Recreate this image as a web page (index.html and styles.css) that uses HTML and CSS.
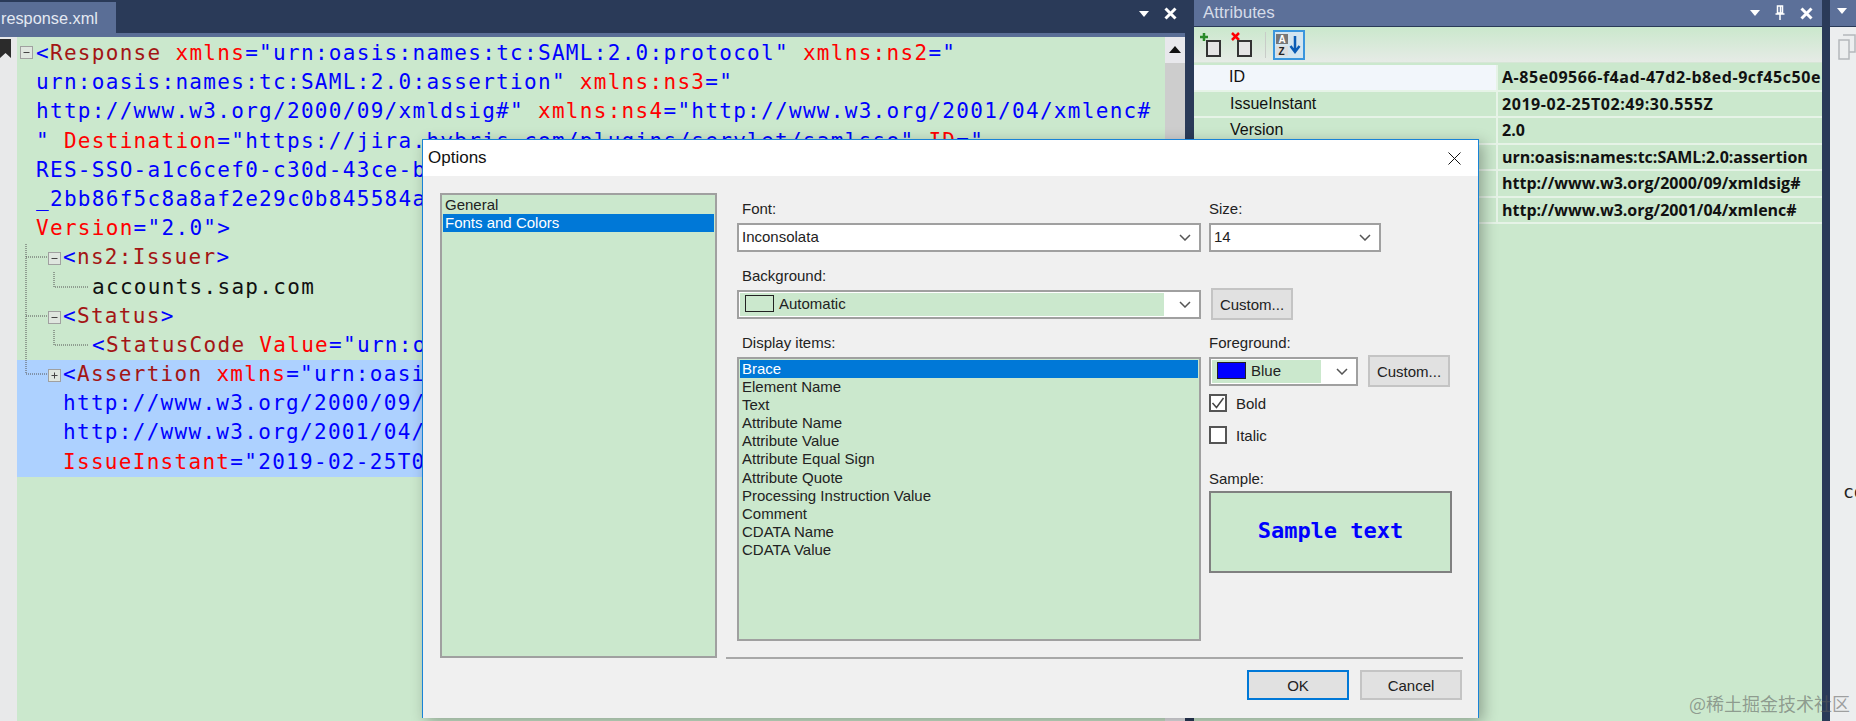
FILE: index.html
```html
<!DOCTYPE html>
<html lang="en">
<head>
    <meta charset="UTF-8">
    <title>XML Notepad - Options</title>
    <link rel="stylesheet" href="styles.css">
</head>
<body>
    <div class="app">
        <!-- document panel -->
        <section class="doc">
            <div class="doc-bar">
                <div class="tab">response.xml</div>
                <div class="bar-btns">
                    <svg class="chev" width="10" height="6" viewBox="0 0 10 6"><path d="M0 0h10L5 6z"/></svg>
                    <svg class="close" width="13" height="13" viewBox="0 0 13 13"><path d="M1.5 1.5l10 10M11.5 1.500l-10 10"/></svg>
                </div>
            </div>
            <div class="doc-strip"></div>
            <div class="doc-body">
                <div class="margin">
                    <svg class="bookmark" width="12" height="20" viewBox="0 0 12 20"><path d="M0 0h11v19L5.500 14 0 19z"/></svg>
                </div>
                <div class="editor">
                    <div class="line"><b>&lt;</b><i>Response</i> <u>xmlns</u>="urn:oasis:names:tc:SAML:2.0:protocol" <u>xmlns:ns2</u>="</div>
                    <div class="line">urn:oasis:names:tc:SAML:2.0:assertion" <u>xmlns:ns3</u>="</div>
                    <div class="line">http://www.w3.org/2000/09/xmldsig#" <u>xmlns:ns4</u>="http://www.w3.org/2001/04/xmlenc#</div>
                    <div class="line">" <u>Destination</u>="https://jira.hybris.com/plugins/servlet/samlsso" <u>ID</u>="</div>
                    <div class="line">RES-SSO-a1c6cef0-c30d-43ce-b</div>
                    <div class="line">_2bb86f5c8a8af2e29c0b845584a</div>
                    <div class="line"><u>Version</u>="2.0"<b>&gt;</b></div>
                    <div class="line lvl1"><b>&lt;</b><i>ns2:Issuer</i><b>&gt;</b></div>
                    <div class="line lvl2 txt">accounts.sap.com</div>
                    <div class="line lvl1"><b>&lt;</b><i>Status</i><b>&gt;</b></div>
                    <div class="line lvl2"><b>&lt;</b><i>StatusCode</i> <u>Value</u>="urn:o</div>
                    <div class="sel">
                        <div class="line lvl1"><b>&lt;</b><i>Assertion</i> <u>xmlns</u>="urn:oasi</div>
                        <div class="line lvl1">http://www.w3.org/2000/09/</div>
                        <div class="line lvl1">http://www.w3.org/2001/04/</div>
                        <div class="line lvl1"><u>IssueInstant</u>="2019-02-25T0</div>
                    </div>
                    <!-- tree guides and fold boxes -->
                    <svg class="guides" width="80" height="360" viewBox="0 0 80 360">
                        <g class="dots">
                            <path d="M9 207V337H31"/>
                            <path d="M9 220H31M9 279H31"/>
                            <path d="M37 235V250H72M37 293V308H72"/>
                        </g>
                        <g class="box">
                            <rect x="3.500" y="9.500" width="12" height="12"/><path d="M6.500 15.500h6"/>
                            <rect x="31.500" y="215.500" width="12" height="12"/><path d="M34.500 221.500h6"/>
                            <rect x="31.500" y="274.500" width="12" height="12"/><path d="M34.500 280.500h6"/>
                            <rect x="31.500" y="332.500" width="12" height="12"/><path d="M34.500 338.500h6M37.500 335.500v6"/>
                        </g>
                    </svg>
                </div>
                <div class="scroll">
                    <svg width="12" height="7" viewBox="0 0 12 7"><path d="M6 0l6 7H0z"/></svg>
                    <div class="thumb"></div>
                </div>
            </div>
        </section>

        <!-- attributes panel -->
        <section class="attrs">
            <div class="attrs-head">
                <span>Attributes</span>
                <div class="bar-btns">
                    <svg class="chev" width="10" height="6" viewBox="0 0 10 6"><path d="M0 0h10L5 6z"/></svg>
                    <svg class="pin" width="12" height="16" viewBox="0 0 12 16"><path d="M3.500 1h5v7h-5zM1.500 9h9M6 9v6M6.500 1v7"/></svg>
                    <svg class="close" width="13" height="13" viewBox="0 0 13 13"><path d="M1.500 1.500l10 10M11.500 1.500l-10 10"/></svg>
                </div>
            </div>
            <div class="toolbar">
                <svg width="24" height="26" viewBox="0 0 24 26">
                    <path d="M4 1v8M0 5h8" stroke="#2a8a2a" stroke-width="2.500" fill="none"/>
                    <rect x="7" y="9" width="13" height="15" fill="#e4e4e4" stroke="#333" stroke-width="2"/>
                </svg>
                <svg width="24" height="26" viewBox="0 0 24 26">
                    <path d="M1 1l7 7M8 1L1 8" stroke="#f00" stroke-width="2.500" fill="none"/>
                    <rect x="7" y="9" width="13" height="15" fill="#e4e4e4" stroke="#333" stroke-width="2"/>
                </svg>
                <span class="tool-sep"></span>
                <div class="tool-on">
                    <svg width="28" height="24" viewBox="0 0 28 24">
                        <rect x="1" y="1" width="12" height="10" fill="#777"/>
                        <rect x="1" y="13" width="12" height="10" fill="#ddd"/>
                        <text x="3.500" y="9.500" class="az light">A</text>
                        <text x="3.500" y="21.500" class="az">Z</text>
                        <path d="M20 3v15M15.500 13l4.500 6 4.500-6" stroke="#0b5cb5" stroke-width="2.500" fill="none"/>
                    </svg>
                </div>
            </div>
            <div class="grid">
                <div class="row first"><div class="name">ID</div><div class="val wide">A-85e09566-f4ad-47d2-b8ed-9cf45c50e</div></div>
                <div class="row"><div class="name">IssueInstant</div><div class="val wide">2019-02-25T02:49:30.555Z</div></div>
                <div class="row"><div class="name">Version</div><div class="val">2.0</div></div>
                <div class="row"><div class="name">xmlns</div><div class="val">urn:oasis:names:tc:SAML:2.0:assertion</div></div>
                <div class="row"><div class="name">xmlns:ns3</div><div class="val">http://www.w3.org/2000/09/xmldsig#</div></div>
                <div class="row"><div class="name">xmlns:ns4</div><div class="val">http://www.w3.org/2001/04/xmlenc#</div></div>
            </div>
        </section>

        <!-- cut off panel on the right -->
        <section class="side">
            <div class="side-head">
                <svg class="chev" width="10" height="6" viewBox="0 0 10 6"><path d="M0 0h10L5 6z"/></svg>
            </div>
            <div class="side-tool">
                <svg width="18" height="26" viewBox="0 0 18 26"><path d="M5 1h12v17H11M1 6h10v19H1z" fill="none" stroke="#b4b8bc" stroke-width="1.500"/></svg>
            </div>
            <div class="side-text">co</div>
        </section>
    </div>

    <!-- options dialog -->
    <div class="dialog">
        <div class="dlg-title">
            <span>Options</span>
            <svg width="13" height="13" viewBox="0 0 13 13"><path d="M.5.5l12 12M12.500.5l-12 12" stroke="#111" fill="none"/></svg>
        </div>
        <div class="dlg-body">
            <div class="nav list">
                <div class="item">General</div>
                <div class="item on">Fonts and Colors</div>
            </div>
            <div class="settings">
                <div class="fields">
                    <div class="f-row">
                        <div class="field w-font">
                            <label>Font:</label>
                            <div class="combo"><span class="combo-val">Inconsolata</span><svg class="down" width="12" height="7" viewBox="0 0 12 7"><path d="M1 1l5 5 5-5"/></svg></div>
                        </div>
                        <div class="field w-size">
                            <label class="flush">Size:</label>
                            <div class="combo"><span class="combo-val">14</span><svg class="down" width="12" height="7" viewBox="0 0 12 7"><path d="M1 1l5 5 5-5"/></svg></div>
                        </div>
                    </div>
                    <div class="f-row">
                        <div class="field w-font">
                            <label>Background:</label>
                            <div class="combo"><span class="combo-val green"><span class="swatch"></span>Automatic</span><svg class="down" width="12" height="7" viewBox="0 0 12 7"><path d="M1 1l5 5 5-5"/></svg></div>
                        </div>
                        <button class="btn custom-bg">Custom...</button>
                    </div>
                    <div class="f-row">
                        <div class="field w-font">
                            <label>Display items:</label>
                            <div class="items list">
                                <div class="item on">Brace</div>
                                <div class="item">Element Name</div>
                                <div class="item">Text</div>
                                <div class="item">Attribute Name</div>
                                <div class="item">Attribute Value</div>
                                <div class="item">Attribute Equal Sign</div>
                                <div class="item">Attribute Quote</div>
                                <div class="item">Processing Instruction Value</div>
                                <div class="item">Comment</div>
                                <div class="item">CDATA Name</div>
                                <div class="item">CDATA Value</div>
                            </div>
                        </div>
                        <div class="field">
                            <label class="flush">Foreground:</label>
                            <div class="fg-row">
                                <div class="combo fg"><span class="combo-val green"><span class="swatch blue"></span>Blue</span><svg class="down" width="12" height="7" viewBox="0 0 12 7"><path d="M1 1l5 5 5-5"/></svg></div>
                                <button class="btn">Custom...</button>
                            </div>
                            <div class="check c-bold">
                                <span class="box"><svg width="14" height="14" viewBox="0 0 14 14"><path d="M1.500 7l4 4.500L12.500 2" stroke="#333" stroke-width="1.500" fill="none"/></svg></span>Bold
                            </div>
                            <div class="check c-italic"><span class="box"></span>Italic</div>
                            <label class="sample-label flush">Sample:</label>
                            <div class="sample">Sample text</div>
                        </div>
                    </div>
                </div>
                <div class="footer">
                    <button class="btn dlg-btn default">OK</button>
                    <button class="btn dlg-btn">Cancel</button>
                </div>
            </div>
        </div>
    </div>

    <div class="watermark">@稀土掘金技术社区</div>
</body>
</html>
```

FILE: styles.css
```css
*{
    margin: 0;
    padding: 0;
    box-sizing: border-box;
}
body{
    width: 1856px;
    height: 721px;
    overflow: hidden;
    position: relative;
    background: #2a3a58;
    font-family: "Liberation Sans", Arial, sans-serif;
}
.app{
    display: flex;
    height: 721px;
}
.bar-btns{
    display: flex;
    align-items: center;
    gap: 15px;
}
.chev{
    fill: #fff;
}
.close path{
    stroke: #fff;
    stroke-width: 3;
    fill: none;
}

/* document panel */
.doc{
    width: 1194px;
    padding-right: 9px;
    display: flex;
    flex-direction: column;
}
.doc-bar{
    height: 33px;
    display: flex;
    justify-content: space-between;
    align-items: center;
    flex-shrink: 0;
}
.doc-bar .bar-btns{
    padding-right: 8px;
    margin-top: -6px;
}
.tab{
    width: 116px;
    height: 31px;
    margin-top: 2px;
    padding-left: 1px;
    line-height: 32px;
    font-size: 16.300px;
    color: #e4e9f2;
    background: #5a6e96;
}
.doc-strip{
    height: 4px;
    background: #5a6e96;
    flex-shrink: 0;
}
.doc-body{
    flex: 1;
    display: flex;
    min-height: 0;
}
.margin{
    width: 17px;
    background: #e8e9ea;
    padding-top: 2px;
    flex-shrink: 0;
}
.bookmark{
    display: block;
    fill: #2b2b2b;
}
.editor{
    flex: 1;
    position: relative;
    background: #cbe8cd;
    padding-top: 2px;
    overflow: hidden;
}
.line{
    height: 29.2px;
    line-height: 29.2px;
    padding-left: 19px;
    white-space: nowrap;
    font-family: "DejaVu Sans Mono", monospace;
    font-size: 21px;
    letter-spacing: 1.3px;
    color: #0000ff;
}
.line b{
    font-weight: normal;
    color: #0000ff;
}
.line i{
    font-style: normal;
    color: #a31515;
}
.line u{
    text-decoration: none;
    color: #ff0000;
}
.lvl1{
    padding-left: 46px;
}
.lvl2{
    padding-left: 75px;
}
.txt{
    color: #111;
}
.sel{
    background: #add1ff;
}
.guides{
    position: absolute;
    left: 0;
    top: 0;
}
.dots path{
    stroke: #555;
    stroke-dasharray: 1 1;
    fill: none;
}
.box rect{
    fill: #dfe6df;
    stroke: #a0a0a0;
}
.box path{
    stroke: #444;
    fill: none;
}
.scroll{
    width: 20px;
    background: #e8e8ec;
    padding-top: 9px;
    text-align: center;
    flex-shrink: 0;
}
.scroll svg{
    display: block;
    margin: 0 auto;
    fill: #111;
}
.thumb{
    height: 640px;
    margin-top: 10px;
    background: #cdcdcd;
}

/* attributes panel */
.attrs{
    width: 628px;
    display: flex;
    flex-direction: column;
    background: #cbe8cd;
}
.attrs-head{
    height: 27px;
    padding: 0 9px;
    display: flex;
    justify-content: space-between;
    align-items: center;
    font-size: 17px;
    color: #d5dbe8;
    background: #5c7099;
    border-bottom: 1px solid #2a3a58;
}
.attrs-head .bar-btns{
    gap: 14px;
}
.pin path{
    stroke: #fff;
    stroke-width: 1.5;
    fill: none;
}
.toolbar{
    height: 35px;
    margin-top: 1px;
    display: flex;
    align-items: center;
    gap: 7px;
    padding-left: 6px;
    background: linear-gradient(#cbe8cd, #e6ebe6);
    border-bottom: 1px solid #d6e6d6;
}
.tool-sep{
    width: 1px;
    height: 26px;
    margin-left: 3px;
    background: #c8ccc8;
}
.tool-on{
    width: 32px;
    height: 30px;
    display: flex;
    align-items: center;
    justify-content: center;
    border: 2px solid #3a96dd;
    background: #d3e5f0;
}
.az{
    font: bold 10px "Liberation Sans", sans-serif;
    fill: #222;
}
.az.light{
    fill: #fff;
}
.grid{
    padding-top: 2px;
}
.row{
    display: flex;
    height: 26.500px;
    padding-left: 31px;
    font-size: 16px;
    color: #111;
    border-bottom: 2px solid #e6f3e7;
}
.row.first{
    padding-left: 2px;
    background: #f2f6fb;
}
.row.first .name{
    padding-left: 33px;
    width: 300px;
}
.name{
    width: 271px;
    padding: 0 5px;
    line-height: 24px;
}
.val{
    flex: 1;
    padding-left: 4px;
    line-height: 24px;
    font-family: "Open Sans", sans-serif;
    font-size: 16px;
    font-weight: bold;
    white-space: nowrap;
    overflow: hidden;
    background: #cbe8cd;
    border-left: 2px solid #e6f3e7;
}
.val.wide{
    letter-spacing: .55px;
}

/* right panel */
.side{
    width: 26px;
    margin-left: 8px;
    background: #eceeef;
    overflow: hidden;
}
.side-head{
    height: 27px;
    padding-left: 7px;
    padding-top: 8px;
    background: #5c7099;
    border-bottom: 1px solid #2a3a58;
}
.side-head svg{
    display: block;
}
.side-tool{
    height: 454px;
    padding: 7px 0 0 8px;
}
.side-text{
    padding-left: 13px;
    font: 18px "DejaVu Sans Mono", monospace;
    color: #222;
}

/* dialog */
.dialog{
    position: absolute;
    left: 422px;
    top: 139px;
    width: 1057px;
    height: 579px;
    background: #f0f0f0;
    border: 1px solid #1883d7;
    border-bottom: none;
    box-shadow: 4px 4px 14px rgba(0, 0, 0, .3);
    display: flex;
    flex-direction: column;
}
.dlg-title{
    height: 36px;
    padding: 0 17px 0 5px;
    background: #fff;
    display: flex;
    justify-content: space-between;
    align-items: center;
    font-size: 17px;
    color: #111;
    flex-shrink: 0;
}
.dlg-body{
    flex: 1;
    display: flex;
    padding: 17px 15px 0 17px;
    font-size: 15px;
    color: #222;
}
.list{
    background: #cbe8cd;
    border: 2px solid #a0a0a0;
    padding: 1px;
    line-height: 18.100px;
}
.item{
    height: 18.100px;
    padding-left: 2px;
    white-space: nowrap;
}
.item.on{
    background: #0078d7;
    color: #fff;
}
.nav{
    width: 277px;
    height: 465px;
    padding-top: 1px;
}
.settings{
    width: 737px;
    margin-left: 9px;
    display: flex;
    flex-direction: column;
}
.fields{
    height: 464px;
    padding: 7px 0 0 11px;
}
.f-row{
    display: flex;
    align-items: flex-end;
    gap: 8px;
    margin-bottom: 15px;
}
.f-row:last-child{
    align-items: flex-start;
    margin-bottom: 0;
}
.field label, .sample-label{
    display: block;
    height: 23px;
    line-height: 18px;
    padding-left: 5px;
}
.field .flush{
    padding-left: 0;
}
.w-font{
    width: 464px;
}
.w-size{
    width: 172px;
}
.combo{
    height: 29px;
    display: flex;
    align-items: center;
    justify-content: space-between;
    background: #fff;
    border: 2px solid #a0a0a0;
    padding-right: 8px;
}
.combo-val{
    padding: 0 0 3px 3px;
    display: flex;
    align-items: center;
}
.combo-val.green{
    flex: 1;
    height: 100%;
    margin: 0 14px 0 0;
    padding: 0 0 2px 5px;
    background: #cbe8cd;
    border: 1px solid #fff;
}
.swatch{
    width: 29px;
    height: 17px;
    margin-right: 5px;
    border: 1px solid #222;
}
.swatch.blue{
    background: #0000ff;
}
.down{
    stroke: #555;
    stroke-width: 1.5;
    fill: none;
    flex-shrink: 0;
}
.btn{
    height: 32px;
    width: 82px;
    font: 15px "Liberation Sans", Arial, sans-serif;
    color: #222;
    background: #e1e1e1;
    border: 2px solid #c4c4c4;
}
.custom-bg{
    margin: 0 0 -1px 2px;
}
.items{
    height: 284px;
    padding: 1px 1px 0;
}
.fg-row{
    display: flex;
    align-items: center;
    gap: 10px;
    margin-top: -2px;
}
.fg{
    width: 149px;
}
.check{
    display: flex;
    align-items: center;
    height: 18px;
}
.c-bold{
    margin-top: 7px;
}
.c-italic{
    margin-top: 14px;
}
.box{
    width: 18px;
    height: 18px;
    margin-right: 9px;
    display: flex;
    align-items: center;
    justify-content: center;
    background: #fff;
    border: 2px solid #555;
}
.field .sample-label{
    margin-top: 26px;
    height: 21px;
}
.sample{
    width: 243px;
    height: 82px;
    padding-bottom: 3px;
    display: flex;
    align-items: center;
    justify-content: center;
    font: bold 22px "DejaVu Sans Mono", monospace;
    color: #0000ff;
    background: #cbe8cd;
    border: 2px solid #808080;
}
.footer{
    height: 60px;
    border-top: 2px solid #a8a8a8;
    padding-top: 11px;
    display: flex;
    justify-content: flex-end;
    gap: 11px;
}
.dlg-btn{
    width: 102px;
    height: 30px;
    margin-right: 1px;
}
.default{
    border-color: #0078d7;
    margin-right: 0;
}

.watermark{
    position: absolute;
    right: 6px;
    bottom: 5px;
    font: 18px "Noto Sans CJK SC", sans-serif;
    color: rgba(90, 90, 90, .55);
}
```
